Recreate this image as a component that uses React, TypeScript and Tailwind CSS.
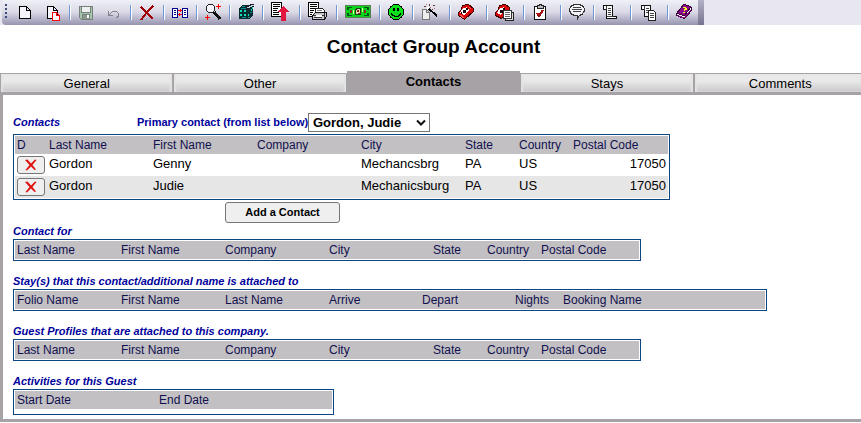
import { Fragment } from 'react';
import type { ReactNode } from 'react';

type Tool = { label: string; width: number; art: ReactNode };
type Column = { name: string; width: number };

// every toolbar drawing is 20 units high, one unit per pixel
const toolGroups: Tool[][] = [
  [
    {
      label: 'New',
      width: 16,
      art: <path d="M2.5 4.5H9.5L13.5 8.5V16.5H2.5ZM9.5 4.5V8.5H13.5" fill="#f4f4fa" stroke="#000" />,
    },
    {
      label: 'New copy',
      width: 16,
      art: (
        <>
          <path d="M2.5 4.5H8.5L12.5 8.5V16.5H2.5ZM8.5 4.5V8.5H12.5" fill="#f4f4fa" stroke="#000" />
          <path d="M7.5 10.5H11.5L14.5 13.5V18.5H7.5ZM11.5 10.5V13.5H14.5" fill="#fff" stroke="#f00" />
        </>
      ),
    },
  ],
  [
    {
      label: 'Save',
      width: 16,
      art: (
        <>
          <path d="M1.5 4.5H14.5V17.5H3.5L1.5 15.5Z" fill="#a5c6ab" stroke="#77807a" />
          <path d="M4 5H12V10H4Z" fill="#eef0f2" />
          <path d="M3.5 5V10.5H12.5V5M4.5 17V12.5H11.5V17" fill="none" stroke="#77807a" />
          <path d="M5 13H11V17H5Z" fill="#8b9690" />
          <path d="M9 13H11V16H9Z" fill="#fff" />
        </>
      ),
    },
    {
      label: 'Undo',
      width: 16,
      art: <path d="M2.5 9V13.5H7M3 13L6.5 9.5H10.5L12.5 11.5V14L10.5 16" fill="none" stroke="#86848e" />,
    },
  ],
  [
    {
      label: 'Delete',
      width: 16,
      art: (
        <>
          <path d="M2 5L14 17" stroke="#a00000" strokeWidth="2" />
          <path d="M14 4L8 10L2 18" stroke="#a00000" strokeWidth="2" fill="none" />
        </>
      ),
    },
  ],
  [
    {
      label: 'Transfer',
      width: 16,
      art: (
        <>
          <path d="M.5 6.5H5.5V15.5H.5ZM10.5 6.5H15.5V15.5H10.5Z" fill="#fff" stroke="#00008b" />
          <path d="M2 8.5H4M2 10.5H4M2 12.5H4M12 8.5H14M12 10.5H14M12 12.5H14" stroke="#00008b" />
          <path d="M6 8.5H10M8.5 7V10M6 12.5H10M7.5 11V14" stroke="#f00" />
        </>
      ),
    },
  ],
  [
    {
      label: 'Find',
      width: 16,
      art: (
        <>
          <path d="M3.5 2.5H7.5L9.5 4.5V8.5L7.5 10.5H3.5L1.5 8.5V4.5Z" fill="#f4f4fa" stroke="#222" />
          <path d="M9 10L15 17" stroke="#111" strokeWidth="3" />
          <path d="M11 4.5H16M13.5 2V7M0 15.5H5M2.5 13V18" stroke="#f00" />
        </>
      ),
    },
  ],
  [
    {
      label: 'Room calendar',
      width: 16,
      art: (
        <g transform="translate(0 -2)">
          <path d="M1 8L4 5H15V15L12 19H1Z" fill="#082c32" />
          <path d="M2 10H4V12H2ZM6 10H8V12H6ZM2 14H4V16H2ZM6 14H8V16H6ZM10 14H11V16H10Z" fill="#16e0b8" />
          <path d="M4 6.5H7M3 8.5H11M12 12.5H14M10 17.5H12M4 17.5H8" stroke="#0c8f91" />
          <path d="M8 6H11L14 4H16V6L12 8H8Z" fill="#c4dce9" stroke="#181820" />
          <path d="M13 9H14V11H13ZM14 7H15V9H14Z" fill="#16e0b8" />
        </g>
      ),
    },
  ],
  [
    {
      label: 'Export report',
      width: 20,
      art: (
        <g transform="translate(-2 -2)">
          <path d="M1.5 2.5H11.5V16.5H1.5Z" fill="#fff" stroke="#000" transform="translate(1 0)" />
          <path d="M4 4.5H11M4 6.5H11M4 8.5H9M4 10.5H8M4 12.5H10M4 14.5H10" stroke="#000" />
          <path d="M14.5 6L21 12H17V21H12V12H8Z" fill="#e3173e" />
        </g>
      ),
    },
  ],
  [
    {
      label: 'Print report',
      width: 20,
      art: (
        <g transform="translate(-1 -1)">
          <path d="M1.5 1.5H11.5V15.5H1.5Z" fill="#fff" stroke="#000" />
          <path d="M3 3.5H10M3 5.5H10M3 7.5H8M3 9.5H7M3 11.5H6M3 13.5H5" stroke="#000" />
          <path d="M8.5 11V7.5H15.5L17.5 9.5V12" fill="#fff" stroke="#222" />
          <path d="M10 9.5H15" stroke="#777" />
          <path d="M5.5 14.5L8.5 11.5H19.5V15.5L17.5 18.5H5.5Z" fill="#c8c8ce" stroke="#111" />
          <path d="M6 14.5H17M7 16.5H15M17.5 12V18" stroke="#333" />
          <path d="M9 14H15V16H9Z" fill="#fff" />
        </g>
      ),
    },
  ],
  [
    {
      label: 'Payment',
      width: 26,
      art: (
        <g transform="translate(0 -2)">
          <path d="M.5 5.5H25.5V17.5H.5Z" fill="#08d51c" stroke="#5f7c54" />
          <path d="M2 7H7V8H4V10H2ZM19 7H24V10H22V8H19ZM2 13H4V15H7V16H2ZM22 13H24V16H19V15H22Z" fill="#04551a" />
          <path d="M11.5 8.5H15.5V14.5H10.5V10.5Z" fill="#d9d6ae" stroke="#174017" />
          <path d="M12 10H14V12H12ZM13 13H16V14H13ZM5 10H7V13H5ZM19 10H21V13H19Z" fill="#8c2424" />
          <path d="M8 10H9V14H8ZM17 8H18V12H17Z" fill="#e8ffa0" />
        </g>
      ),
    },
  ],
  [
    {
      label: 'Guest',
      width: 16,
      art: (
        <g transform="translate(0 -2)">
          <circle cx="8" cy="12" r="7.5" fill="#08e019" stroke="#000" />
          <path d="M5 8H7V11H5ZM9 8H11V11H9Z" fill="#000" />
          <path d="M3.5 13V14.5H4.5V15.5H6V16.5H10V15.5H11.5V14.5H12.5V13" fill="none" stroke="#000" />
        </g>
      ),
    },
  ],
  [
    {
      label: 'Wizard',
      width: 20,
      art: (
        <g transform="translate(0 -1)">
          <path d="M1.5 8.5H5.5L8.5 11.5V18.5H1.5ZM5.5 8.5V11.5H8.5" fill="#eee" stroke="#777" />
          <path d="M7 7L16 15" stroke="#000" strokeWidth="2" />
          <path d="M6 6H8V8H6Z" fill="#fff" />
          <path d="M3 5H5V6H3ZM8 3H9V5H8ZM12 4H14V5H12ZM11 8H12V9H11Z" fill="#6e3434" />
          <path d="M9 6H10V7H9ZM5 3H6V4H5ZM13 7H14V8H13Z" fill="#bc7474" />
        </g>
      ),
    },
  ],
  [
    {
      label: 'Telephone',
      width: 20,
      art: (
        <g transform="translate(-1 -1)">
          <path d="M5.5 4.5L11.5 3.5L16.5 7.5V10.5L7.5 18.5L1.5 14.5V11.5L4.5 8.5Z" fill="#db0808" stroke="#450000" />
          <path d="M5 8L10 6L12 9L7 14L3 12Z" fill="#fff" />
          <path d="M6 9H9V12H6ZM9 7H11V9H9ZM4 11H5V13H4Z" fill="#180808" />
          <path d="M12 6L14 8M3 14L7 17" stroke="#ff5555" />
        </g>
      ),
    },
  ],
  [
    {
      label: 'Call list',
      width: 20,
      art: (
        <g transform="translate(-1 -1)">
          <path d="M5.5 4.5L11.5 3.5L15.5 6.5V10.5L7.5 17.5L1.5 14.5V11.5L4.5 8.5Z" fill="#db0808" stroke="#450000" />
          <path d="M5 8L10 6L11 9L7 14L3 12Z" fill="#fff" />
          <path d="M6 9H9V12H6ZM9 7H11V9H9Z" fill="#180808" />
          <path d="M11.5 11.5H19.5V19.5H11.5Z" fill="#ddd" stroke="#222" />
          <path d="M9.5 9.5H17.5V17.5H9.5Z" fill="#fff" stroke="#333" />
          <path d="M11 11.5H16M11 13.5H16M11 15.5H16" stroke="#666" />
        </g>
      ),
    },
  ],
  [
    {
      label: 'Tasks',
      width: 20,
      art: (
        <g transform="translate(-2 -2)">
          <path d="M4.5 6.5H15.5V19.5H4.5Z" fill="#fff" stroke="#111" />
          <path d="M7.5 8.5V5.5H9.5V4.5H11.5V5.5H13.5V8.5Z" fill="#bbb" stroke="#222" />
          <path d="M7 13L9 16L13 10" fill="none" stroke="#a01010" strokeWidth="2" />
        </g>
      ),
    },
  ],
  [
    {
      label: 'Comments',
      width: 16,
      art: (
        <g transform="translate(0 -2)">
          <path d="M5.5 4.5H10.5L14.5 6.5L15.5 9.5L14.5 13.5L10.5 15.5L8.5 19V15.5H5.5L1.5 13.5L.5 9.5L1.5 6.5Z" fill="#f1f1f6" stroke="#333" />
          <path d="M4 7.5H12M3 9.5H13M4 11.5H12" stroke="#444" />
        </g>
      ),
    },
  ],
  [
    {
      label: 'Script',
      width: 20,
      art: (
        <g transform="translate(-2 -1)">
          <path d="M3.5 4.5H12.5V15.5H16.5V17.5H6.5V8.5H3.5Z" fill="#f8f8fa" stroke="#111" />
          <path d="M6.5 4.5V8.5M8 7.5H11M8 9.5H11M8 11.5H11M8 13.5H11M7 15.5H13" stroke="#444" />
        </g>
      ),
    },
  ],
  [
    {
      label: 'Copy script',
      width: 20,
      art: (
        <g transform="translate(-1 -1)">
          <path d="M3.5 4.5H12.5V15.5H6.5V8.5H3.5Z" fill="#f8f8fa" stroke="#111" />
          <path d="M6.5 4.5V8.5M8 7.5H11M8 9.5H11M8 11.5H10" stroke="#444" />
          <path d="M10.5 9.5H15.5L17.5 11.5V19.5H10.5Z" fill="#fff" stroke="#222" />
          <path d="M12 12.5H16M12 14.5H16M12 16.5H16" stroke="#444" />
        </g>
      ),
    },
  ],
  [
    {
      label: 'Help',
      width: 16,
      art: (
        <g transform="translate(0 -2)">
          <path d="M.5 13.5L7.5 4.5L15.5 7.5V10.5L8.5 18.5L.5 15.5Z" fill="#fff" stroke="#3a003a" />
          <path d="M1 13L8 4L15 7L8 16Z" fill="#8b078b" stroke="#3a003a" />
          <path d="M2 15.5L8 18L15 10" fill="none" stroke="#8b078b" />
          <path d="M7 7H10V8H11V10H9V11H8V9H9V8H7ZM7 12H9V13H7Z" fill="#ffff18" />
        </g>
      ),
    },
  ],
];

const tabs = ['General', 'Other', 'Contacts', 'Stays', 'Comments'];

const contacts = [
  { last: 'Gordon', first: 'Genny', company: '', city: 'Mechancsbrg', state: 'PA', country: 'US', zip: '17050' },
  { last: 'Gordon', first: 'Judie', company: '', city: 'Mechanicsburg', state: 'PA', country: 'US', zip: '17050' },
];

const profileColumns: Column[] = [
  { name: 'Last Name', width: 104 },
  { name: 'First Name', width: 104 },
  { name: 'Company', width: 104 },
  { name: 'City', width: 104 },
  { name: 'State', width: 54 },
  { name: 'Country', width: 54 },
  { name: 'Postal Code', width: 100 },
];

const contactColumns: Column[] = [
  { name: 'D', width: 32 },
  ...profileColumns.slice(0, 6),
  { name: 'Postal Code', width: 97 },
];

const stayColumns: Column[] = [
  { name: 'Folio Name', width: 104 },
  { name: 'First Name', width: 104 },
  { name: 'Last Name', width: 104 },
  { name: 'Arrive', width: 93 },
  { name: 'Depart', width: 93 },
  { name: 'Nights', width: 48 },
  { name: 'Booking Name', width: 204 },
];

const activityColumns: Column[] = [
  { name: 'Start Date', width: 142 },
  { name: 'End Date', width: 175 },
];

function Toolbar() {
  return (
    <div className="flex bg-[#e8e7ef] pl-[2px]">
      <div className="flex h-[25px] items-start rounded-l-sm bg-linear-to-b from-[#f0f0f7] via-[#d9d8e5] to-[#9794b0] pt-[2px] pr-[6px] pl-[3px]">
        <div className="mt-[2px] mr-[10px] flex flex-col gap-[2px]">
          {[0, 1, 2, 3].map((dot) => (
            <span key={dot} className="size-[2px] bg-[#3c4c78]" />
          ))}
        </div>
        {toolGroups.map((group, i) => (
          <Fragment key={group[0].label}>
            {i > 0 && <span className="mt-[3px] mr-[7px] ml-2 h-[15px] w-[2px] border-r border-white bg-[#6d98d5]" />}
            <div className="flex gap-3">
              {group.map((tool) => (
                <button key={tool.label} type="button" aria-label={tool.label}>
                  <svg
                    width={tool.width}
                    height="20"
                    viewBox={`0 0 ${tool.width} 20`}
                    fill="none"
                    shapeRendering="crispEdges"
                    className="block"
                  >
                    {tool.art}
                  </svg>
                </button>
              ))}
            </div>
          </Fragment>
        ))}
      </div>
      <div className="w-[6px] bg-linear-to-b from-[#b4b2c6] to-[#77738f]" />
    </div>
  );
}

function HeaderRow({ columns }: { columns: Column[] }) {
  return (
    <>
      <colgroup>
        {columns.map((column) => (
          <col key={column.name} style={{ width: column.width }} />
        ))}
      </colgroup>
      <thead>
        <tr className="h-[18px] bg-[#c3c0c3] text-left text-xs text-[#10104f]">
          {columns.map((column) => (
            <th key={column.name} className="px-[2px] py-0 leading-[18px] font-normal whitespace-nowrap">
              {column.name}
            </th>
          ))}
        </tr>
      </thead>
    </>
  );
}

function Section({ title, columns, spare }: { title: string; columns: Column[]; spare?: boolean }) {
  return (
    <section>
      <h2 className="text-[11px] leading-4 font-bold text-[#00009c] italic">{title}</h2>
      <div className={`w-fit border border-[#0d4482] p-px ${spare ? 'pb-[5px]' : ''}`}>
        <table className="table-fixed border-collapse" style={{ width: columns.reduce((sum, c) => sum + c.width, 0) }}>
          <HeaderRow columns={columns} />
        </table>
      </div>
    </section>
  );
}

function ContactTable() {
  return (
    <div className="w-fit border border-[#0d4482] p-px">
      <table className="w-[653px] table-fixed border-collapse">
        <HeaderRow columns={contactColumns} />
        <tbody className="text-[13px] leading-5 text-black">
          {contacts.map((contact) => (
            <tr key={contact.first} className="h-[22px] align-top even:bg-[#e6e6e6]">
              <td className="px-[2px] pt-[2px]">
                <button
                  type="button"
                  aria-label={`Delete ${contact.first} ${contact.last}`}
                  className="flex h-[18px] w-[28px] items-center justify-center rounded-[3px] border border-[#767676] bg-[#efefef]"
                >
                  <svg width="12" height="12" viewBox="0 0 12 12" fill="none">
                    <path d="M0 1L2.5 .5L6 4.5L10 .5L11.5 1L7.5 6L11 10.5L9.5 11L6 7.5L2 11.5L.5 11L4.5 6Z" fill="#e11212" />
                  </svg>
                </button>
              </td>
              <td className="px-[2px]">{contact.last}</td>
              <td className="px-[2px]">{contact.first}</td>
              <td className="px-[2px]">{contact.company}</td>
              <td className="px-[2px]">{contact.city}</td>
              <td className="px-[2px]">{contact.state}</td>
              <td className="px-[2px]">{contact.country}</td>
              <td className="px-[2px] text-right">{contact.zip}</td>
            </tr>
          ))}
        </tbody>
      </table>
    </div>
  );
}

export default function App() {
  return (
    <div className="overflow-hidden bg-white font-['Liberation_Sans',Arial,sans-serif] text-black">
      <Toolbar />
      <h1 className="-mr-[6px] pt-[10px] pb-3 text-center text-[19px] leading-6 font-bold">Contact Group Account</h1>

      <nav className="-mr-[6px] grid grid-cols-5 items-end border-b-[3px] border-[#a7a2a6] text-[13px]">
        {tabs.map((tab) =>
          tab === 'Contacts' ? (
            <button key={tab} type="button" className="h-[21px] bg-[#a7a2a6] font-bold">
              {tab}
            </button>
          ) : (
            <button
              key={tab}
              type="button"
              className="h-[19px] border-t border-r border-l border-[#a7a2a6] bg-linear-to-b from-[#e9e9e9] from-40% to-[#c9c7ca] shadow-[inset_2px_0_2px_#e4e4e4,inset_-2px_0_2px_#e4e4e4]"
            >
              {tab}
            </button>
          ),
        )}
      </nav>

      <main className="-mr-[6px] border-b-[3px] border-l-[3px] border-[#a7a2a6] pt-[18px] pb-1 pl-[10px]">
        <div className="mb-[2px] flex h-[19px] items-center text-[11px] font-bold text-[#00009c]">
          <h2 className="w-[124px] italic">Contacts</h2>
          <label htmlFor="primary" className="w-[171px] whitespace-nowrap">
            Primary contact (from list below)
          </label>
          <div className="relative">
            <select
              id="primary"
              className="block h-[19px] w-[122px] appearance-none rounded-none border border-[#767676] bg-white pl-1 text-[13px] leading-4 font-bold text-black"
            >
              <option>Gordon, Judie</option>
              <option>Gordon, Genny</option>
            </select>
            <svg
              width="10"
              height="8"
              viewBox="0 0 10 8"
              fill="none"
              className="pointer-events-none absolute top-[6px] right-[4px]"
            >
              <path d="M1 1.5L5 5.5L9 1.5" stroke="#111" strokeWidth="2" />
            </svg>
          </div>
        </div>
        <ContactTable />
        <button
          type="button"
          className="mt-[2px] ml-[212px] block h-[21px] w-[115px] rounded-[3px] border border-[#767676] bg-[#efefef] pb-[2px] text-[11px] leading-4 font-bold"
        >
          Add a Contact
        </button>
        <div className="flex flex-col gap-3">
          <Section title="Contact for" columns={profileColumns} />
          <Section title="Stay(s) that this contact/additional name is attached to" columns={stayColumns} />
          <Section title="Guest Profiles that are attached to this company." columns={profileColumns} />
          <Section title="Activities for this Guest" columns={activityColumns} spare />
        </div>
      </main>
    </div>
  );
}
